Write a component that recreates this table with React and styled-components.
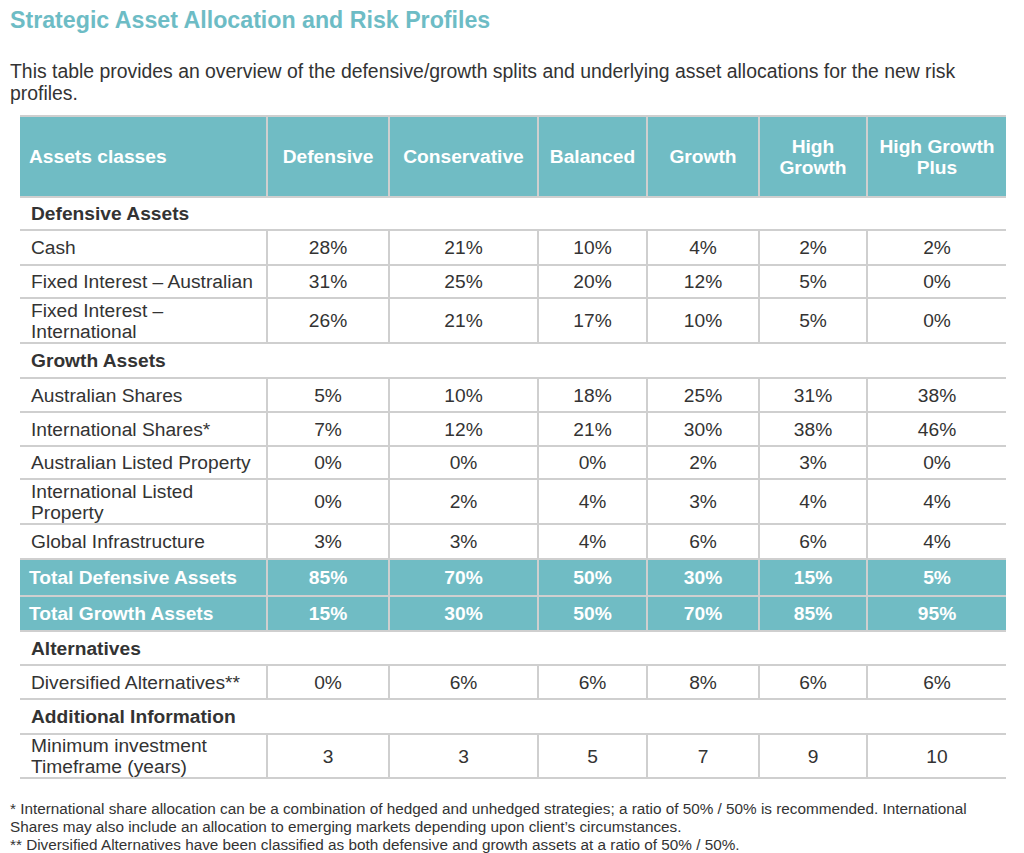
import React from "react";
import styled, { createGlobalStyle } from "styled-components";

const Global = createGlobalStyle`
  html, body { margin: 0; padding: 0; background: #ffffff; }
  body { font-family: "Liberation Sans", Arial, sans-serif; color: #333333; }
`;

const Page = styled.div`
  padding: 7px 10px 0 10px;
`;

const Title = styled.h2`
  margin: 0;
  font-size: 23.2px;
  line-height: 26px;
  font-weight: bold;
  color: #6dbcc5;
`;

const Intro = styled.p`
  margin: 27px 0 11px 0;
  font-size: 19.4px;
  line-height: 22px;
  color: #333333;
`;

const Table = styled.table`
  margin-left: 10px;
  width: 986px;
  border-collapse: collapse;
  table-layout: fixed;
  font-size: 19.2px;
  line-height: 21px;
`;

const Row = styled.tr`
  height: ${(p) => p.$h}px;
  background: ${(p) => (p.$teal ? "#70bcc4" : "#ffffff")};
  color: ${(p) => (p.$teal ? "#ffffff" : "#333333")};
  font-weight: ${(p) => (p.$teal ? "bold" : "normal")};
`;

const Cell = styled.td`
  padding: 0 10px;
  border-top: 2px solid #cfcfcf;
  border-bottom: 2px solid #cfcfcf;
  border-left: 2px solid #cfcfcf;
  text-align: center;
  vertical-align: middle;
  &:first-child {
    border-left: none;
    text-align: left;
    padding-left: 11px;
  }
`;

const HeadCell = styled(Cell)`
  padding: 0 6px;
  &:first-child { padding-left: 9px; }
`;

const TotalCell = styled(Cell)`
  &:first-child { padding-left: 9px; }
`;

const SectionCell = styled.td`
  padding: 0 11px;
  border-top: 2px solid #cfcfcf;
  border-bottom: 2px solid #cfcfcf;
  font-weight: bold;
  text-align: left;
  vertical-align: middle;
`;

const Notes = styled.div`
  margin-top: 21px;
  font-size: 15.3px;
  line-height: 18px;
  color: #333333;
`;

const Note = styled.div``;

const BottomRule = styled.div`
  height: 2px;
  background: #e2e2e2;
  margin: 0 -10px;
`;

const headers = ["Assets classes", "Defensive", "Conservative", "Balanced", "Growth", "High Growth", "High Growth Plus"];
const widths = [247, 122, 149, 109, 112, 108, 139];

const rows = [
  { type: "section", label: "Defensive Assets", h: 33 },
  { label: "Cash", v: ["28%", "21%", "10%", "4%", "2%", "2%"], h: 35 },
  { label: "Fixed Interest – Australian", v: ["31%", "25%", "20%", "12%", "5%", "0%"], h: 33 },
  { label: "Fixed Interest – International", v: ["26%", "21%", "17%", "10%", "5%", "0%"], h: 45 },
  { type: "section", label: "Growth Assets", h: 35 },
  { label: "Australian Shares", v: ["5%", "10%", "18%", "25%", "31%", "38%"], h: 34 },
  { label: "International Shares*", v: ["7%", "12%", "21%", "30%", "38%", "46%"], h: 34 },
  { label: "Australian Listed Property", v: ["0%", "0%", "0%", "2%", "3%", "0%"], h: 33 },
  { label: "International Listed Property", v: ["0%", "2%", "4%", "3%", "4%", "4%"], h: 45 },
  { label: "Global Infrastructure", v: ["3%", "3%", "4%", "6%", "6%", "4%"], h: 35 },
  { type: "total", label: "Total Defensive Assets", v: ["85%", "70%", "50%", "30%", "15%", "5%"], h: 37 },
  { type: "total", label: "Total Growth Assets", v: ["15%", "30%", "50%", "70%", "85%", "95%"], h: 35 },
  { type: "section", label: "Alternatives", h: 34 },
  { label: "Diversified Alternatives**", v: ["0%", "6%", "6%", "8%", "6%", "6%"], h: 34 },
  { type: "section", label: "Additional Information", h: 35 },
  { label: "Minimum investment Timeframe (years)", v: ["3", "3", "5", "7", "9", "10"], h: 44 },
];

export default function App() {
  return (
    <>
      <Global />
      <Page>
        <Title>Strategic Asset Allocation and Risk Profiles</Title>
        <Intro>
          This table provides an overview of the defensive/growth splits and underlying asset allocations for the new risk profiles.
        </Intro>
        <Table>
          <colgroup>
            {widths.map((w, i) => (
              <col key={i} style={{ width: w }} />
            ))}
          </colgroup>
          <thead>
            <Row $h={81} $teal>
              {headers.map((h) => (
                <HeadCell as="th" key={h}>{h}</HeadCell>
              ))}
            </Row>
          </thead>
          <tbody>
            {rows.map((r) => {
              if (r.type === "section") {
                return (
                  <Row key={r.label} $h={r.h}>
                    <SectionCell colSpan={7}>{r.label}</SectionCell>
                  </Row>
                );
              }
              const C = r.type === "total" ? TotalCell : Cell;
              return (
                <Row key={r.label} $h={r.h} $teal={r.type === "total"}>
                  <C>{r.label}</C>
                  {r.v.map((v, i) => (
                    <C key={i}>{v}</C>
                  ))}
                </Row>
              );
            })}
          </tbody>
        </Table>
        <Notes>
          <Note>
            * International share allocation can be a combination of hedged and unhedged strategies; a ratio of 50% / 50% is recommended. International Shares may also include an allocation to emerging markets depending upon client’s circumstances.
          </Note>
          <Note>** Diversified Alternatives have been classified as both defensive and growth assets at a ratio of 50% / 50%.</Note>
        </Notes>
        <BottomRule />
      </Page>
    </>
  );
}
